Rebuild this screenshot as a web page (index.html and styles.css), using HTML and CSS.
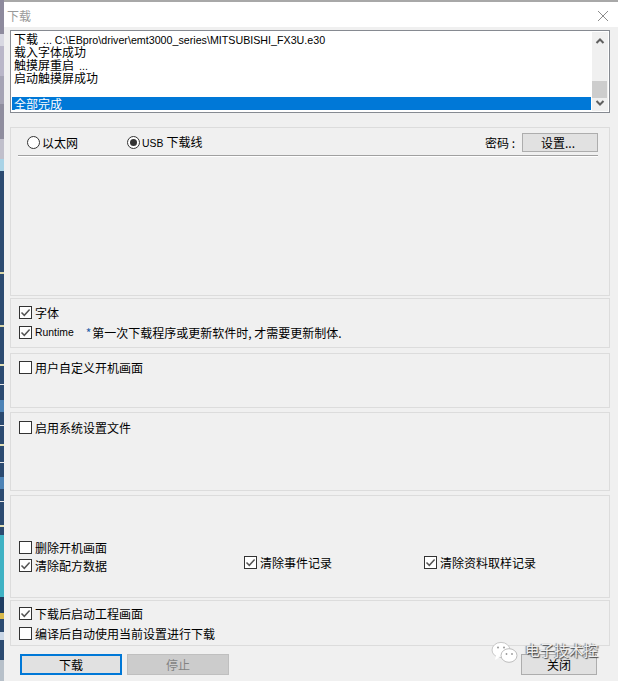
FILE: index.html
```html
<!DOCTYPE html>
<html lang="zh-CN">
<head>
<meta charset="utf-8">
<title>下载</title>
<link rel="stylesheet" href="styles.css">
</head>
<body>
<svg width="0" height="0" class="defs" aria-hidden="true">
  <symbol id="tick" viewBox="0 0 11 11"><path d="M1.5 5.5 4.3 8.3 9.6 2.6" fill="none" stroke="#555" stroke-width="1.5"/></symbol>
</svg>
<div class="desktop">
  <svg class="strip" width="4" height="681" viewBox="0 0 4 681" aria-hidden="true">
    <rect width="4" height="681" fill="#2b4a70"/>
    <rect width="4" height="160" fill="#a9a6bb"/>
    <rect y="0" width="4" height="34" fill="#8d8a9d"/>
    <rect y="34" width="4" height="12" fill="#d8d8e2"/>
    <rect y="46" width="4" height="30" fill="#b9b6c8"/>
    <rect y="76" width="4" height="28" fill="#a5a3b4"/>
    <rect y="104" width="4" height="35" fill="#8f8d9e"/>
    <rect y="139" width="4" height="20" fill="#c0bfcb"/>
    <rect y="159" width="4" height="12" fill="#a9d3e6"/>
    <rect y="272" width="4" height="2" fill="#d9d6a8"/>
    <rect y="325" width="4" height="2" fill="#d9d6a8"/>
    <rect y="364" width="4" height="2" fill="#e3e0b5"/>
    <rect y="384" width="4" height="1" fill="#e6e6e6"/>
    <rect y="400" width="4" height="12" fill="#4d83b6"/>
    <rect y="425" width="4" height="1" fill="#e6e6e6"/>
    <rect y="444" width="4" height="2" fill="#e3e0b5"/>
    <rect y="462" width="4" height="1" fill="#e6e6e6"/>
    <rect y="477" width="4" height="12" fill="#4d83b6"/>
    <rect y="501" width="4" height="1" fill="#e6e6e6"/>
    <rect y="525" width="4" height="2" fill="#e3e0b5"/>
    <rect y="535" width="4" height="62" fill="#3fb2c4"/>
    <rect y="597" width="4" height="16" fill="#1f3d62"/>
    <rect y="613" width="4" height="6" fill="#d8b94d"/>
    <rect y="632" width="4" height="8" fill="#c9d6e6"/>
    <rect y="660" width="4" height="21" fill="#b7c0c9"/>
  </svg>
  <main class="window">
    <header class="titlebar">
      <span class="title">下载</span>
      <svg class="close-x" width="12" height="12" viewBox="0 0 12 12" aria-hidden="true"><path d="M1 1 11 11M11 1 1 11" stroke="#8c8c8c" fill="none"/></svg>
    </header>
    <div class="content">
      <section class="log">
        <div class="log-lines">
          <div class="log-line">下载<span class="path"> ... C:\EBpro\driver\emt3000_series\MITSUBISHI_FX3U.e30</span></div>
          <div class="log-line">载入字体成功</div>
          <div class="log-line">触摸屏重启<span class="path"> ...</span></div>
          <div class="log-line">启动触摸屏成功</div>
          <div class="log-line"></div>
          <div class="log-line selected">全部完成</div>
        </div>
        <div class="scrollbar">
          <svg width="10" height="6" viewBox="0 0 10 6" aria-hidden="true"><path d="M1.5 5 5 1.5 8.5 5" fill="none" stroke="#606060" stroke-width="2"/></svg>
          <div class="track"><div class="thumb"></div></div>
          <svg width="10" height="6" viewBox="0 0 10 6" aria-hidden="true"><path d="M1.5 1 5 4.5 8.5 1" fill="none" stroke="#606060" stroke-width="2"/></svg>
        </div>
      </section>

      <section class="group group-net">
        <div class="net-row">
          <span class="radio"></span><span class="radio-label label-a">以太网</span>
          <span class="radio on"></span><span class="radio-label"><span class="latin usb">USB</span>下载线</span>
          <span class="pw">密码 :</span>
          <button class="btn btn-set">设置...</button>
        </div>
        <div class="rule"></div>
      </section>

      <section class="group group-font">
        <label class="check"><span class="box"><svg width="11" height="11"><use href="#tick"/></svg></span>字体</label>
        <div class="check runtime-row">
          <span class="box"><svg width="11" height="11"><use href="#tick"/></svg></span><span class="latin">Runtime</span><span class="note"><i>*</i>第一次下载程序或更新软件时, 才需要更新制体.</span>
        </div>
      </section>

      <section class="group group-boot">
        <label class="check"><span class="box"></span>用户自定义开机画面</label>
      </section>

      <section class="group group-sys">
        <label class="check"><span class="box"></span>启用系统设置文件</label>
      </section>

      <section class="group group-clear">
        <div class="clear-col">
          <label class="check"><span class="box"></span>删除开机画面</label>
          <label class="check"><span class="box"><svg width="11" height="11"><use href="#tick"/></svg></span>清除配方数据</label>
        </div>
        <label class="check clear-mid"><span class="box"><svg width="11" height="11"><use href="#tick"/></svg></span>清除事件记录</label>
        <label class="check clear-right"><span class="box"><svg width="11" height="11"><use href="#tick"/></svg></span>清除资料取样记录</label>
      </section>

      <section class="group group-after">
        <label class="check"><span class="box"><svg width="11" height="11"><use href="#tick"/></svg></span>下载后启动工程画面</label>
        <label class="check"><span class="box"></span>编译后自动使用当前设置进行下载</label>
      </section>

      <footer class="actions">
        <button class="btn btn-main">下载</button>
        <button class="btn btn-off">停止</button>
        <button class="btn btn-close">关闭</button>
      </footer>
    </div>
    <div class="watermark">
      <svg width="28" height="23" viewBox="0 0 28 23" aria-hidden="true">
        <ellipse cx="10" cy="9" rx="9" ry="7.6" fill="#fff" stroke="#c8c8c8"/>
        <path d="M5 14 4 19 9 16Z" fill="#fff"/>
        <ellipse cx="18" cy="14.5" rx="8" ry="6.8" fill="#fff" stroke="#bdbdbd"/>
        <circle cx="7" cy="6.5" r="1" fill="#999"/><circle cx="13" cy="6.5" r="1" fill="#999"/>
        <circle cx="15.5" cy="13" r=".9" fill="#999"/><circle cx="21" cy="13" r=".9" fill="#999"/>
      </svg>
      <span class="wm-text">电子技术控</span>
    </div>
  </main>
</div>
</body>
</html>
```

FILE: styles.css
```css
* { box-sizing: border-box; }
html, body { margin: 0; padding: 0; }
body {
  width: 618px;
  height: 681px;
  overflow: hidden;
  font: 12px/13px "Noto Sans CJK SC", "Liberation Sans", sans-serif;
  color: #000;
  background: #f0f0f0;
}
.defs { position: absolute; }
.desktop { display: flex; height: 681px; }
.strip { flex: none; display: block; }
.window {
  position: relative;
  flex: 1;
  display: flex;
  flex-direction: column;
  border-top: 2px solid #a8a8a8;
  background: #f0f0f0;
  min-width: 0;
}
.titlebar {
  flex: none;
  height: 25px;
  background: #fff;
  display: flex;
  align-items: center;
  justify-content: space-between;
  padding: 2px 9px 0 3px;
}
.title { color: #999; font-size: 12px; }
.close-x { display: block; }
.content {
  flex: 1;
  padding: 3px 8px 0 6px;
  display: flex;
  flex-direction: column;
}
.latin { font-family: "Liberation Sans", sans-serif; font-size: 10.4px; }
.usb { margin-right: 3px; }

.log {
  height: 83px;
  background: #fff;
  border: 1px solid #868a91;
  display: flex;
  padding: 1px;
}
.log-lines { flex: 1; min-width: 0; }
.log-line {
  height: 13px;
  line-height: 13px;
  padding-left: 2px;
  white-space: nowrap;
}
.path { font-family: "Liberation Sans", sans-serif; font-size: 10.7px; margin-left: 2px; }
.log-line.selected { background: #0078d7; color: #fff; }
.scrollbar {
  flex: none;
  width: 16px;
  margin-left: 1px;
  background: #f0f0f0;
  display: flex;
  flex-direction: column;
  align-items: center;
  padding: 6px 0 5px;
}
.track { flex: 1; width: 100%; padding-top: 37px; }
.thumb { height: 17px; background: #cdcdcd; width: 15px; }

.group {
  border: 1px solid #dcdcdc;
  padding: 0 0 0 8px;
  flex: none;
}
.group-net { height: 169px; margin-top: 14px; padding: 4px 11px 0 7px; }
.net-row { display: flex; align-items: center; height: 20px; }
.radio {
  width: 13px;
  height: 13px;
  border: 1px solid #333;
  border-radius: 50%;
  background: #fff;
  margin: 0 2px 0 9px;
  flex: none;
  position: relative;
}
.label-a { width: 85px; }
.radio.on { margin-left: 0; }
.radio.on::after {
  content: "";
  position: absolute;
  inset: 2px;
  border-radius: 50%;
  background: #333;
}
.pw { margin-left: auto; margin-right: 7px; }
.rule { height: 2px; margin-top: 3px; background: linear-gradient(#a0a0a0 50%, #fff 50%); }

.btn {
  font: inherit;
  color: #000;
  padding: 0;
  background: #e1e1e1;
  border: 1px solid #adadad;
  height: 21px;
}
.btn-set { width: 76px; height: 19px; padding-right: 4px; }
.check {
  display: flex;
  align-items: center;
  height: 13px;
  white-space: nowrap;
}
.box {
  width: 13px;
  height: 13px;
  border: 1px solid #333;
  background: #fff;
  margin-right: 3px;
  flex: none;
  display: flex;
}
.box svg { display: block; }

.group-font { height: 50px; margin-top: 2px; padding-top: 7px; }
.runtime-row { margin-top: 7px; }
.note { margin-left: 12px; }
.note i { font-style: normal; color: #1f5fa8; margin-right: 1px; }
.group-boot { height: 55px; margin-top: 5px; padding-top: 7px; }
.group-sys { height: 79px; margin-top: 4px; padding-top: 8px; }
.group-clear {
  height: 103px;
  margin-top: 4px;
  padding-top: 45px;
  display: flex;
  align-items: flex-start;
}
.clear-col { width: 225px; display: flex; flex-direction: column; gap: 5px; }
.clear-mid { width: 180px; margin-top: 15px; }
.clear-right { margin-top: 15px; }
.group-after {
  height: 46px;
  margin-top: 2px;
  padding-top: 6px;
  display: flex;
  flex-direction: column;
  gap: 7px;
}
.actions {
  display: flex;
  margin-top: 8px;
  padding-left: 10px;
}
.btn-main { width: 102px; border: 2px solid #0078d7; }
.btn-off { width: 102px; margin-left: 5px; background: #ccc; border-color: #bfbfbf; color: #838383; }
.btn-close { width: 76px; margin-left: auto; margin-right: 13px; }

.watermark {
  position: absolute;
  top: 639px;
  left: 487px;
  display: flex;
  align-items: center;
  gap: 6px;
}
.wm-text {
  font-size: 14.6px;
  line-height: 18px;
  color: #eee;
  white-space: nowrap;
  text-shadow: 1px 1px 1px #444, -1px 0 1px #777;
  margin-top: -5px;
}
```
